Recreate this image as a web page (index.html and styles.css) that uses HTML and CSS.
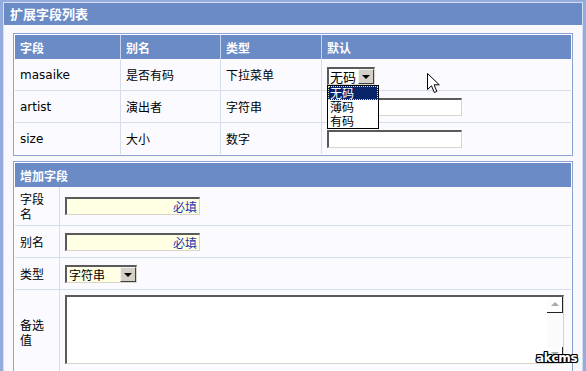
FILE: index.html
```html
<!DOCTYPE html>
<html lang="zh-CN">
<head>
    <meta charset="UTF-8">
    <title>扩展字段列表</title>
    <link rel="stylesheet" href="styles.css">
</head>
<body>
<div class="panel">
    <div class="panel-title">扩展字段列表</div>
    <div class="panel-body">
        <div class="box">
            <table class="grid fields">
                <colgroup><col class="c1"><col class="c2"><col class="c3"><col></colgroup>
                <tr class="head"><th>字段</th><th>别名</th><th>类型</th><th>默认</th></tr>
                <tr>
                    <td class="en">masaike</td><td>是否有码</td><td>下拉菜单</td>
                    <td>
                        <div class="combo-wrap">
                            <span class="combo small"><span class="combo-text">无码</span><span class="combo-btn"></span></span>
                            <ul class="dropdown">
                                <li class="on">无码</li>
                                <li>薄码</li>
                                <li>有码</li>
                            </ul>
                        </div>
                    </td>
                </tr>
                <tr>
                    <td class="en">artist</td><td>演出者</td><td>字符串</td>
                    <td><input class="field" type="text"></td>
                </tr>
                <tr>
                    <td class="en">size</td><td>大小</td><td>数字</td>
                    <td><input class="field" type="text"></td>
                </tr>
            </table>
        </div>

        <div class="box">
            <table class="grid form">
                <colgroup><col class="label-col"><col></colgroup>
                <tr class="head"><th colspan="2">增加字段</th></tr>
                <tr class="tall">
                    <td class="label">字段名</td>
                    <td><input class="field required" type="text" placeholder="必填"></td>
                </tr>
                <tr>
                    <td class="label">别名</td>
                    <td><input class="field required" type="text" placeholder="必填"></td>
                </tr>
                <tr>
                    <td class="label">类型</td>
                    <td><span class="combo wide"><span class="combo-text">字符串</span><span class="combo-btn"></span></span></td>
                </tr>
                <tr class="last">
                    <td class="label">备选值</td>
                    <td>
                        <div class="memo">
                            <textarea></textarea>
                            <div class="scrollbar">
                                <span class="sb-btn up"></span>
                                <span class="sb-track"></span>
                                <span class="sb-btn down"></span>
                            </div>
                        </div>
                    </td>
                </tr>
            </table>
        </div>
    </div>
</div>

<svg class="cursor" width="14" height="22" viewBox="0 0 14 22">
    <path d="M0.5 0.5 L0.5 16.5 L4.5 12.8 L7.3 19.5 L9.8 18.4 L7.1 11.8 L12.3 11.8 Z" fill="#fff" stroke="#000" stroke-width="1"/>
</svg>
<div class="watermark">akcms</div>
</body>
</html>
```

FILE: styles.css
```css
body {
    margin: 0;
    height: 371px;
    overflow: hidden;
    background-color: #93acdd;
    font-family: "Noto Sans CJK SC", "DejaVu Sans", sans-serif;
    font-size: 12px;
    color: #000;
    position: relative;
}

.panel {
    margin: 2px 3px 0 3px;
    border: 1px solid #d3dcf0;
    background-color: #f8f8fd;
    height: 400px;
}

.panel-title {
    height: 22px;
    line-height: 22px;
    padding-left: 6px;
    background-color: #6a8bc6;
    color: #fff;
    font-weight: bold;
    font-size: 13px;
}

.panel-body {
    padding: 8px 9px 0 9px;
}

.box {
    border: 1px solid #89a2d2;
    padding: 1px;
    background-color: #fff;
    margin-bottom: 5px;
}

.grid {
    width: 100%;
    border-collapse: separate;
    border-spacing: 0;
    table-layout: fixed;
    background-color: #fbfbff;
}

.grid th,
.grid td {
    padding: 0 5px;
    text-align: left;
    vertical-align: middle;
    border-right: 1px solid #d5dcea;
    border-bottom: 1px solid #d5dcea;
    white-space: nowrap;
}

.grid tr > :last-child {
    border-right: none;
}

.grid tr:last-child > * {
    border-bottom: none;
}

.grid .head th {
    height: 24px;
    background-color: #6a8bc6;
    color: #fff;
    font-weight: bold;
    border-bottom: none;
    border-right: 1px solid #c7d3ec;
}

.grid .head th:last-child {
    border-right: none;
}

.fields .c1 { width: 106px; }
.fields .c2 { width: 100px; }
.fields .c3 { width: 101px; }

.fields td {
    height: 31px;
}

.en {
    font-family: "DejaVu Sans", sans-serif;
    font-size: 12px;
}

.form .label-col { width: 45px; }

.form td {
    height: 31px;
}

.form .tall td {
    height: 38px;
}

.form td.label {
    white-space: normal;
    line-height: 15px;
    padding-right: 10px;
}

.form .last td {
    height: 78px;
    vertical-align: top;
    padding-top: 5px;
}

.form .last td.label {
    vertical-align: middle;
    padding-top: 0;
}

/* sunken text box */
.field {
    display: block;
    box-sizing: border-box;
    width: 135px;
    height: 18px;
    margin: 0;
    padding: 0 2px;
    border-top: 2px solid #5a5a5a;
    border-left: 2px solid #5a5a5a;
    border-right: 1px solid #d8d4cc;
    border-bottom: 1px solid #d8d4cc;
    background-color: #fff;
    font-family: "Noto Sans CJK SC", sans-serif;
    font-size: 12px;
    outline: none;
}

.field.required {
    background-color: #ffffe4;
    text-align: right;
}

.field.required::placeholder {
    color: #1c2fae;
    opacity: 1;
}

/* drop-down boxes */
.combo {
    display: flex;
    box-sizing: border-box;
    height: 18px;
    border-top: 2px solid #5a5a5a;
    border-left: 2px solid #5a5a5a;
    border-right: 1px solid #d8d4cc;
    border-bottom: 1px solid #d8d4cc;
    background-color: #fff;
}

.combo.small { width: 48px; }
.combo.wide { width: 72px; background-color: #ffffe4; }

.combo-text {
    flex: 1;
    padding-left: 1px;
    font-size: 13px;
    line-height: 15px;
}

.combo.wide .combo-text {
    font-size: 12px;
    padding-left: 2px;
}

.combo-btn {
    position: relative;
    box-sizing: border-box;
    width: 16px;
    height: 15px;
    background-color: #d4d0c8;
    border-top: 1px solid #f4f2ee;
    border-left: 1px solid #f4f2ee;
    border-right: 1px solid #404040;
    border-bottom: 1px solid #404040;
}

.combo-btn::after {
    content: "";
    position: absolute;
    left: 3px;
    top: 5px;
    border-left: 4px solid transparent;
    border-right: 4px solid transparent;
    border-top: 4px solid #000;
}

.combo-wrap {
    position: relative;
    top: 1px;
}

.dropdown {
    position: absolute;
    left: 0;
    top: 18px;
    z-index: 2;
    width: 50px;
    margin: 0;
    padding: 0;
    list-style: none;
    border: 1px solid #000;
    background-color: #fff;
    font-size: 12px;
    line-height: 14px;
}

.dropdown li {
    height: 14px;
    padding-left: 2px;
    box-sizing: border-box;
}

.dropdown li.on {
    background-color: #0a246a;
    color: #fff;
    outline: 1px dotted #e8e4a0;
    outline-offset: -1px;
}

/* memo box with classic scroll bar */
.memo {
    display: flex;
    box-sizing: border-box;
    width: 499px;
    height: 69px;
    border-top: 2px solid #5a5a5a;
    border-left: 2px solid #5a5a5a;
    border-right: 1px solid #d8d4cc;
    border-bottom: 1px solid #d8d4cc;
    background-color: #fff;
}

.memo textarea {
    flex: 1;
    border: none;
    resize: none;
    outline: none;
    margin: 0;
    background: transparent;
}

.scrollbar {
    display: flex;
    flex-direction: column;
    width: 16px;
    background-color: #fbfbfb;
}

.sb-track {
    flex: 1;
}

.sb-btn {
    position: relative;
    box-sizing: border-box;
    height: 16px;
    background-color: #fdfdfd;
    border-right: 1px solid #222;
    border-bottom: 1px solid #222;
}

.sb-btn::after {
    content: "";
    position: absolute;
    left: 4px;
    top: 5px;
    border-left: 4px solid transparent;
    border-right: 4px solid transparent;
}

.sb-btn.up::after { border-bottom: 4px solid #a8a8a8; }
.sb-btn.down::after { border-top: 4px solid #a8a8a8; }

/* overlays */
.cursor {
    position: absolute;
    left: 427px;
    top: 73px;
}

.watermark {
    position: absolute;
    left: 536px;
    top: 351px;
    font-family: "DejaVu Sans", sans-serif;
    font-weight: bold;
    font-size: 12px;
    color: #fff;
    letter-spacing: -0.3px;
    text-shadow: 1px 0 #000, -1px 0 #000, 0 1px #000, 0 -1px #000,
                 1px 1px #000, -1px -1px #000, 1px -1px #000, -1px 1px #000;
}
```
